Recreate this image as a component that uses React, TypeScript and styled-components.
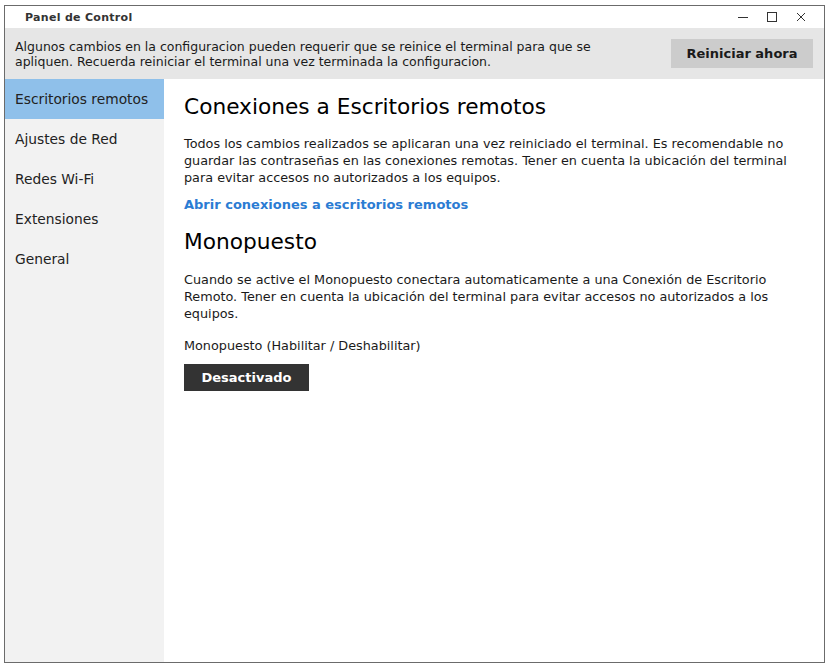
import * as React from 'react'
import styled, { createGlobalStyle } from 'styled-components'

const GlobalStyle = createGlobalStyle`
  html, body {
    margin: 0;
    padding: 0;
    background: #ffffff;
  }
  body {
    font-family: 'DejaVu Sans', Verdana, sans-serif;
    color: #1a1a1a;
  }
`

const Screen = styled.div`
  padding: 5px 0 0 4px;
`

const Window = styled.div`
  width: 821px;
  height: 658px;
  box-sizing: border-box;
  border: 1px solid #6b6b6b;
  display: flex;
  flex-direction: column;
  background: #ffffff;
`

const TitleBar = styled.div`
  height: 22px;
  display: flex;
  align-items: center;
  justify-content: space-between;
  padding: 0 9px 0 20px;
  flex-shrink: 0;
`

const TitleText = styled.span`
  font-size: 11px;
  font-weight: bold;
  color: #333333;
  letter-spacing: 0.3px;
`

const Controls = styled.div`
  display: flex;
  height: 100%;
`

const ControlButton = styled.div`
  width: 29px;
  height: 100%;
  display: flex;
  align-items: center;
  justify-content: center;
`

const Notice = styled.div`
  height: 51px;
  flex-shrink: 0;
  background: #e6e6e6;
  display: flex;
  align-items: center;
  justify-content: space-between;
  padding: 0 11px 0 10px;
`

const NoticeText = styled.p`
  margin: 0;
  font-size: 12.5px;
  line-height: 15px;
  color: #1a1a1a;
  width: 600px;
`

const GrayButton = styled.button`
  border: none;
  background: #cccccc;
  font-family: 'DejaVu Sans', Verdana, sans-serif;
  font-size: 13px;
  font-weight: bold;
  color: #1a1a1a;
  width: 142px;
  height: 29px;
  padding: 0;
`

const Body = styled.div`
  flex: 1;
  display: flex;
  min-height: 0;
`

const Sidebar = styled.nav`
  width: 159px;
  background: #f2f2f2;
  display: flex;
  flex-direction: column;
`

const NavItem = styled.div<{ $active?: boolean }>`
  height: 40px;
  display: flex;
  align-items: center;
  padding-left: 10px;
  font-size: 13.8px;
  color: #222222;
  background: ${p => (p.$active ? '#8fc0ea' : 'transparent')};
`

const Content = styled.main`
  flex: 1;
  padding: 12px 20px 0 20px;
`

const Heading = styled.h1`
  margin: 0;
  font-size: 21.7px;
  font-weight: normal;
  line-height: 31px;
  color: #000000;
`

const Paragraph = styled.p`
  margin: 0;
  font-size: 12.8px;
  line-height: 17px;
  color: #1a1a1a;
`

const LinkText = styled.a`
  display: block;
  font-size: 13px;
  font-weight: bold;
  color: #2b7cd3;
  text-decoration: none;
  line-height: 17px;
`

const DarkButton = styled.button`
  border: none;
  background: #333333;
  color: #ffffff;
  font-family: 'DejaVu Sans', Verdana, sans-serif;
  font-size: 13px;
  font-weight: bold;
  width: 125px;
  height: 27px;
  padding: 0;
`

const Section = styled.section<{ $top: number }>`
  margin-top: ${p => p.$top}px;
`

const navItems = [
  'Escritorios remotos',
  'Ajustes de Red',
  'Redes Wi-Fi',
  'Extensiones',
  'General',
]

export default function App() {
  return (
    <>
      <GlobalStyle />
      <Screen>
        <Window>
          <TitleBar>
            <TitleText>Panel de Control</TitleText>
            <Controls>
              <ControlButton>
                <svg width="12" height="12" viewBox="0 0 12 12">
                  <line x1="1" y1="6.5" x2="11" y2="6.5" stroke="#333" strokeWidth="1" />
                </svg>
              </ControlButton>
              <ControlButton>
                <svg width="12" height="12" viewBox="0 0 12 12">
                  <rect x="1.5" y="1.5" width="9" height="9" fill="none" stroke="#333" strokeWidth="1" />
                </svg>
              </ControlButton>
              <ControlButton>
                <svg width="12" height="12" viewBox="0 0 12 12">
                  <path d="M2 2 L10 10 M10 2 L2 10" stroke="#333" strokeWidth="1" />
                </svg>
              </ControlButton>
            </Controls>
          </TitleBar>
          <Notice>
            <NoticeText>
              Algunos cambios en la configuracion pueden requerir que se reinice el terminal para que se
              apliquen. Recuerda reiniciar el terminal una vez terminada la configuracion.
            </NoticeText>
            <GrayButton>Reiniciar ahora</GrayButton>
          </Notice>
          <Body>
            <Sidebar>
              {navItems.map((item, i) => (
                <NavItem key={item} $active={i === 0}>
                  {item}
                </NavItem>
              ))}
            </Sidebar>
            <Content>
              <Heading>Conexiones a Escritorios remotos</Heading>
              <Section $top={13}>
                <Paragraph>
                  Todos los cambios realizados se aplicaran una vez reiniciado el terminal. Es recomendable no
                  guardar las contraseñas en las conexiones remotas. Tener en cuenta la ubicación del terminal
                  para evitar accesos no autorizados a los equipos.
                </Paragraph>
              </Section>
              <Section $top={10}>
                <LinkText href="#">Abrir conexiones a escritorios remotos</LinkText>
              </Section>
              <Section $top={13}>
                <Heading>Monopuesto</Heading>
              </Section>
              <Section $top={14}>
                <Paragraph>
                  Cuando se active el Monopuesto conectara automaticamente a una Conexión de Escritorio
                  Remoto. Tener en cuenta la ubicación del terminal para evitar accesos no autorizados a los
                  equipos.
                </Paragraph>
              </Section>
              <Section $top={15}>
                <Paragraph>Monopuesto (Habilitar / Deshabilitar)</Paragraph>
              </Section>
              <Section $top={10}>
                <DarkButton>Desactivado</DarkButton>
              </Section>
            </Content>
          </Body>
        </Window>
      </Screen>
    </>
  )
}
